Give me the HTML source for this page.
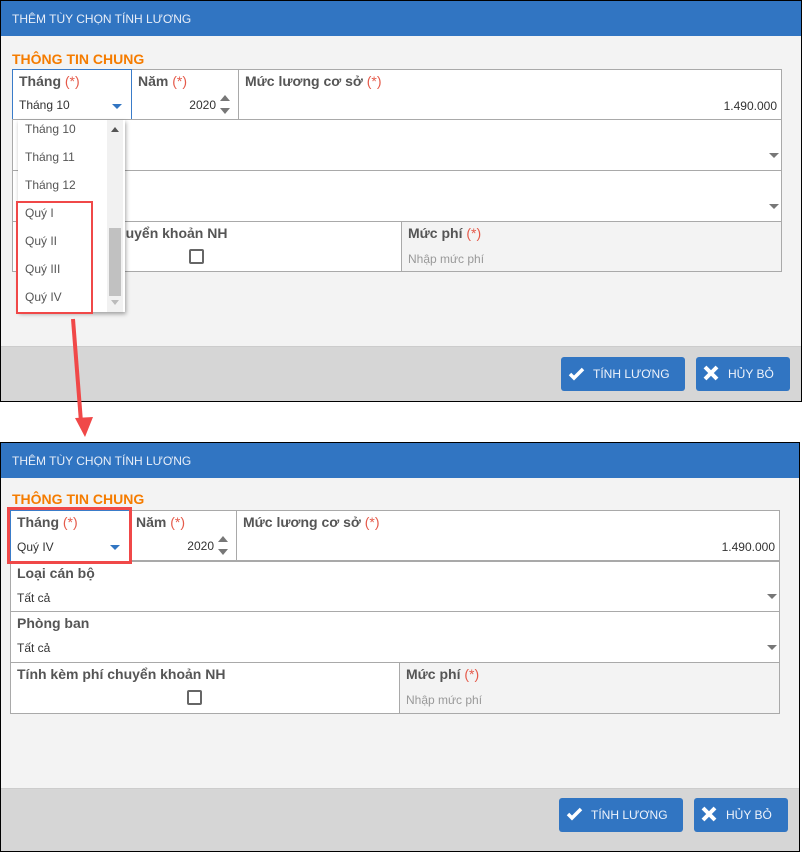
<!DOCTYPE html>
<html><head><meta charset="utf-8"><style>
*{box-sizing:border-box;margin:0;padding:0}
body{width:802px;height:843px;background:#fff;position:relative;font-family:"Liberation Sans",Arial,sans-serif;overflow:hidden}
.a{position:absolute}
.dlg{position:absolute;border:1px solid #000;background:#f3f3f3;overflow:hidden}
.hd{position:absolute;left:0;right:0;top:0;height:35px;background:#3175c2;color:#e8eef8;font-size:12px;padding:11px 0 0 11px}
.sec{position:absolute;left:11px;color:#f57c00;font-weight:bold;font-size:14px}
.cell{position:absolute;border:1px solid #a9a9a9;background:#fff}
.lb{position:absolute;left:6px;top:3px;font-size:14px;font-weight:bold;color:#555}
.lb i{font-style:normal;color:#e55a4a;font-weight:normal}
.v{position:absolute;font-size:12px;color:#333}
.tri{position:absolute;width:0;height:0;border-left:5px solid transparent;border-right:5px solid transparent;border-top:5px solid #777}
.up{position:absolute;width:0;height:0;border-left:5px solid transparent;border-right:5px solid transparent;border-bottom:6px solid #777}
.ft{position:absolute;left:0;right:0;background:#d6d6d6;border-top:1px solid #ccc}
.btn{position:absolute;background:#3175c2;border-radius:3px;color:#eef3fb;font-size:12px;height:34px;line-height:34px}
.cb{position:absolute;width:15px;height:15px;border:2px solid #666;border-radius:2px;background:#fff}
</style></head><body>

<!-- Dialog 1 -->
<div class="dlg" style="left:0;top:0;width:802px;height:402px">
 <div class="hd">THÊM TÙY CHỌN TÍNH LƯƠNG</div>
 <div class="sec" style="top:50px">THÔNG TIN CHUNG</div>
 <div class="cell" style="left:11px;top:68px;width:770px;height:51px"></div>
 <div class="cell" style="left:130px;top:68px;width:108px;height:51px"><div class="lb">Năm <i>(*)</i></div><div class="v" style="right:22px;top:28px">2020</div><div class="up" style="left:88px;top:25px"></div><div class="tri" style="left:88px;top:38px;border-top-width:6px"></div></div>
 <div class="cell" style="left:237px;top:68px;width:544px;height:51px"><div class="lb">Mức lương cơ sở <i>(*)</i></div><div class="v" style="right:4px;top:29px">1.490.000</div></div>
 <div class="cell" style="left:11px;top:68px;width:120px;height:52px;border-color:#3a7cc9"><div class="lb">Tháng <i>(*)</i></div><div class="v" style="left:6px;top:28px">Tháng 10</div><div class="tri" style="left:99px;top:34px;border-top-color:#3175c2"></div></div>
 <div class="cell" style="left:11px;top:118px;width:770px;height:52px"><div class="tri" style="left:756px;top:33px"></div></div>
 <div class="cell" style="left:11px;top:169px;width:770px;height:52px"><div class="tri" style="left:756px;top:33px"></div></div>
 <div class="cell" style="left:11px;top:220px;width:390px;height:51px"><div class="lb">Tính kèm phí chuyển khoản NH</div><div class="cb" style="left:176px;top:27px"></div></div>
 <div class="cell" style="left:400px;top:220px;width:381px;height:51px;background:#f3f3f3"><div class="lb">Mức phí <i>(*)</i></div><div class="v" style="left:6px;top:30px;color:#999">Nhập mức phí</div></div>
 <div class="ft" style="top:345px;height:55px"></div>
 <div class="btn" style="left:560px;top:356px;width:124px;padding-left:32px">TÍNH LƯƠNG</div>
 <div class="btn" style="left:695px;top:356px;width:94px;padding-left:32px">HỦY BỎ</div>
</div>
<svg class="a" style="left:567px;top:364px" width="20" height="20" viewBox="0 0 20 20"><path d="M3 10l4 4 9-9" stroke="#fff" stroke-width="3.5" fill="none"/></svg>
<svg class="a" style="left:702px;top:364px" width="18" height="18" viewBox="0 0 18 18"><path d="M3 3l12 12M15 3L3 15" stroke="#fff" stroke-width="4"/></svg>

<!-- Dropdown -->
<div class="a" style="left:18px;top:120px;width:107px;height:192px;background:#fff;box-shadow:1px 2px 4px rgba(0,0,0,.35)">
 <div class="v" style="left:7px;top:2px;color:#555">Tháng 10</div>
 <div class="v" style="left:7px;top:30px;color:#555">Tháng 11</div>
 <div class="v" style="left:7px;top:58px;color:#555">Tháng 12</div>
 <div class="v" style="left:7px;top:86px;color:#555">Quý I</div>
 <div class="v" style="left:7px;top:114px;color:#555">Quý II</div>
 <div class="v" style="left:7px;top:142px;color:#555">Quý III</div>
 <div class="v" style="left:7px;top:170px;color:#555">Quý IV</div>
 <div class="a" style="left:89px;top:0;width:16px;height:192px;background:#f1f1f1"></div>
 <div class="a" style="left:91px;top:108px;width:12px;height:68px;background:#c1c1c1"></div>
 <div class="tri" style="left:93px;top:7px;border-top:0;border-bottom:5px solid #555;border-left-width:4px;border-right-width:4px"></div>
 <div class="tri" style="left:93px;top:180px;border-top-color:#bbb;border-left-width:4px;border-right-width:4px"></div>
</div>
<div class="a" style="left:16px;top:201px;width:77px;height:113px;border:2px solid #f04848"></div>
<svg class="a" style="left:0;top:0" width="802" height="443"><path d="M73 319L81 422" stroke="#f04848" stroke-width="4"/><path d="M75 418L93 417L85 437Z" fill="#f04848"/></svg>

<!-- Dialog 2 -->
<div class="dlg" style="left:0;top:442px;width:800px;height:410px">
 <div class="hd">THÊM TÙY CHỌN TÍNH LƯƠNG</div>
 <div class="sec" style="top:48px">THÔNG TIN CHUNG</div>
 <div class="cell" style="left:9px;top:67px;width:770px;height:51px"></div>
 <div class="cell" style="left:128px;top:67px;width:108px;height:51px"><div class="lb">Năm <i>(*)</i></div><div class="v" style="right:22px;top:28px">2020</div><div class="up" style="left:88px;top:25px"></div><div class="tri" style="left:88px;top:38px;border-top-width:6px"></div></div>
 <div class="cell" style="left:235px;top:67px;width:544px;height:51px"><div class="lb">Mức lương cơ sở <i>(*)</i></div><div class="v" style="right:4px;top:29px">1.490.000</div></div>
 <div class="cell" style="left:9px;top:67px;width:120px;height:52px;border-color:#3a7cc9"><div class="lb">Tháng <i>(*)</i></div><div class="v" style="left:6px;top:29px">Quý IV</div><div class="tri" style="left:99px;top:34px;border-top-color:#3175c2"></div></div>
 <div class="cell" style="left:9px;top:118px;width:770px;height:51px"><div class="lb">Loại cán bộ</div><div class="v" style="left:6px;top:29px">Tất cả</div><div class="tri" style="left:756px;top:32px"></div></div>
 <div class="cell" style="left:9px;top:168px;width:770px;height:52px"><div class="lb">Phòng ban</div><div class="v" style="left:6px;top:29px">Tất cả</div><div class="tri" style="left:756px;top:33px"></div></div>
 <div class="cell" style="left:9px;top:219px;width:390px;height:52px"><div class="lb">Tính kèm phí chuyển khoản NH</div><div class="cb" style="left:176px;top:27px"></div></div>
 <div class="cell" style="left:398px;top:219px;width:381px;height:52px;background:#f3f3f3"><div class="lb">Mức phí <i>(*)</i></div><div class="v" style="left:6px;top:30px;color:#999">Nhập mức phí</div></div>
 <div class="ft" style="top:345px;height:65px"></div>
 <div class="btn" style="left:558px;top:355px;width:124px;padding-left:32px">TÍNH LƯƠNG</div>
 <div class="btn" style="left:693px;top:355px;width:94px;padding-left:32px">HỦY BỎ</div>
</div>
<svg class="a" style="left:565px;top:804px" width="20" height="20" viewBox="0 0 20 20"><path d="M3 10l4 4 9-9" stroke="#fff" stroke-width="3.5" fill="none"/></svg>
<svg class="a" style="left:700px;top:805px" width="18" height="18" viewBox="0 0 18 18"><path d="M3 3l12 12M15 3L3 15" stroke="#fff" stroke-width="4"/></svg>
<div class="a" style="left:7px;top:507px;width:125px;height:57px;border:3px solid #f04848"></div>
</body></html>
